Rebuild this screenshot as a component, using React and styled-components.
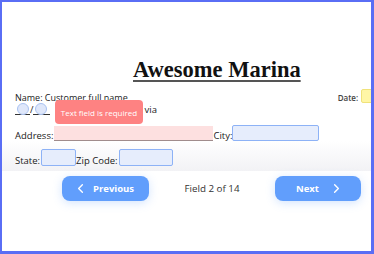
import React from 'react';
import styled, { createGlobalStyle } from 'styled-components';
import { ChevronLeft, ChevronRight } from 'lucide-react';

const GlobalStyle = createGlobalStyle`
  html, body {
    margin: 0;
    padding: 0;
    background: #fff;
  }
  body {
    font-family: 'Open Sans', 'Noto Sans', sans-serif;
  }
`;

const Frame = styled.div`
  box-sizing: border-box;
  width: 374px;
  height: 254px;
  border-style: solid;
  border-color: #5a6ef5;
  border-width: 2px 3px 3px 2px;
  background: #fff;
  position: relative;
  overflow: hidden;
`;

const Viewer = styled.div`
  height: 169px;
  overflow: hidden;
  background: linear-gradient(to bottom, #fff 0%, #fff 82%, #f2f2f5 100%);
`;

const Page = styled.div`
  width: 420px;
  padding: 55px 0 0 13px;
  color: #222;
`;

const Title = styled.h1`
  margin: 0 0 6px 118px;
  height: 26px;
  font-family: 'Liberation Serif', 'Times New Roman', serif;
  font-weight: 700;
  font-size: 22.5px;
  line-height: 26px;
  color: #111;
  text-decoration: underline;
  text-decoration-thickness: 2px;
  text-underline-offset: 3px;
  text-decoration-color: #555;
`;

const Row = styled.div`
  display: flex;
  align-items: flex-end;
  height: ${(p) => p.$h}px;
  margin-top: ${(p) => p.$mt || 0}px;
`;

const Label = styled.span`
  font-size: ${(p) => p.$size || 9.5}px;
  line-height: 10px;
  white-space: nowrap;
  color: ${(p) => p.$color || '#1a1a1a'};
  font-weight: ${(p) => p.$weight || 400};
  margin-left: ${(p) => p.$ml || 0}px;
  padding-right: ${(p) => p.$pr || 0}px;
`;

const DateBox = styled.span`
  width: 30px;
  height: 14px;
  margin-left: 3px;
  box-sizing: border-box;
  background: #fff6a6;
  border: 1px solid #f0e27a;
  border-radius: 2px;
`;

const Slot = styled.span`
  display: inline-flex;
  align-items: flex-start;
  width: ${(p) => p.$w}px;
  height: 12px;
  border-bottom: 1px solid #333;
  padding-left: 2px;
  box-sizing: border-box;
`;

const Radio = styled.span`
  width: 10px;
  height: 10px;
  border-radius: 50%;
  background: #dfe7fa;
  border: 1px solid #a9c2f2;
`;

const Field = styled.span`
  box-sizing: border-box;
  width: ${(p) => p.$w}px;
  height: ${(p) => p.$h}px;
  background: ${(p) => (p.$error ? '#fde0e0' : '#e6edfc')};
  border: ${(p) => (p.$error ? 'none' : '1px solid #8db2f6')};
  border-bottom: 1px solid ${(p) => (p.$error ? '#a08c8c' : '#8db2f6')};
  border-radius: ${(p) => (p.$error ? 0 : 2)}px;
`;

const Toast = styled.div`
  position: absolute;
  left: 53px;
  top: 98px;
  width: 88px;
  height: 24px;
  border-radius: 4px;
  background: #fe8282;
  color: #fff;
  font-size: 8px;
  display: flex;
  align-items: center;
  justify-content: center;
  white-space: nowrap;
`;

const NavBar = styled.div`
  padding: 5px 0 4px 60px;
`;

const NavInner = styled.div`
  width: 299px;
  display: flex;
  align-items: center;
  justify-content: space-between;
`;

const NavButton = styled.button`
  box-sizing: border-box;
  width: ${(p) => p.$w}px;
  height: 25px;
  display: flex;
  align-items: center;
  gap: ${(p) => p.$gap}px;
  padding: 0 0 0 ${(p) => p.$pl}px;
  border: none;
  border-radius: 8px;
  background: #619efc;
  color: #fff;
  font-family: 'Open Sans', 'Noto Sans', sans-serif;
  font-weight: 700;
  font-size: 9.5px;
  box-shadow: 0 2px 10px rgba(97, 158, 252, 0.28);
`;

const Counter = styled.span`
  font-size: 9.8px;
  color: #333;
`;

export default function App() {
  return (
    <>
      <GlobalStyle />
      <Frame>
        <Viewer>
          <Page>
            <Title>Awesome Marina</Title>
            <Row $h={14}>
              <Label $size={9}>Name: Customer full name</Label>
              <Label $size={8} $color="#444" $weight={600} $ml={210}>Date:</Label>
              <DateBox />
            </Row>
            <Row $h={12}>
              <Slot $w={15}><Radio /></Slot>
              <Label>/</Label>
              <Slot $w={17}><Radio /></Slot>
              <Label $ml={94}>via</Label>
            </Row>
            <Row $h={16} $mt={10}>
              <Label $pr={1}>Address:</Label>
              <Field $w={159} $h={15} $error />
              <Label>City:</Label>
              <Field $w={87} $h={16} />
            </Row>
            <Row $h={17} $mt={8}>
              <Label $pr={1}>State:</Label>
              <Field $w={35} $h={17} />
              <Label $pr={1}>Zip Code:</Label>
              <Field $w={54} $h={17} />
            </Row>
          </Page>
        </Viewer>
        <Toast>Text field is required</Toast>
        <NavBar>
          <NavInner>
            <NavButton $w={87} $pl={11} $gap={5}>
              <ChevronLeft size={15} strokeWidth={2.2} />
              Previous
            </NavButton>
            <Counter>Field 2 of 14</Counter>
            <NavButton $w={86} $pl={21} $gap={10}>
              Next
              <ChevronRight size={15} strokeWidth={2.2} />
            </NavButton>
          </NavInner>
        </NavBar>
      </Frame>
    </>
  );
}
